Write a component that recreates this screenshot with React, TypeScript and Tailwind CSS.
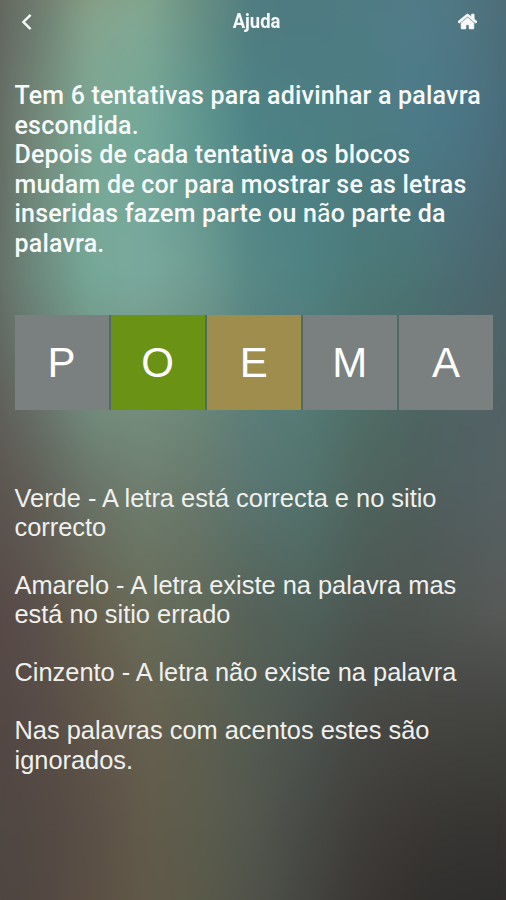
import React from "react";
import { FaHome } from "react-icons/fa";

type Row = { y: number; colors: string[] };

// Colour mesh of the blurred wallpaper: each row lists evenly spaced colours, left to right.
const mesh: Row[] = [
  { y: 0, colors: ["#605f5b", "#74756a", "#869478", "#87a384", "#698d80", "#4f7c80", "#4e7a82", "#507a83", "#527a86", "#50747f", "#4d6b76"] },
  { y: 50, colors: ["#615f59", "#6c7d70", "#85a58e", "#80a895", "#669084", "#4f7c80", "#4e7b82", "#4f7c84", "#517c8a", "#4f7582", "#4c6a76"] },
  { y: 150, colors: ["#5f635e", "#74897a", "#7aa996", "#73a899", "#5f9790", "#4d8386", "#4c8084", "#4d7d82", "#4c7b88", "#4b7484", "#496876"] },
  { y: 285, colors: ["#646761", "#6c8a7e", "#76a898", "#7aa99d", "#6f9c92", "#578886", "#4f8283", "#4c7978", "#4b7475", "#4b6a72", "#4b6269"] },
  { y: 420, colors: ["#5d5954", "#666d65", "#71897a", "#748b7b", "#6a8576", "#5b7c78", "#557974", "#4f6d65", "#4e6460", "#516264", "#546264"] },
  { y: 480, colors: ["#5a524d", "#616158", "#6a766a", "#6f8071", "#687a6e", "#5a7772", "#53746e", "#50665f", "#4f605d", "#526062", "#566365"] },
  { y: 600, colors: ["#584846", "#5b504b", "#65604f", "#696c59", "#616a5a", "#566259", "#4f625b", "#4e5753", "#4f5652", "#545855", "#5a5c5b"] },
  { y: 700, colors: ["#524644", "#564b46", "#5f5549", "#666150", "#5e6050", "#545c52", "#4c544f", "#484945", "#464642", "#444441", "#434340"] },
  { y: 800, colors: ["#504543", "#534943", "#5b4f46", "#625b4c", "#5c5d4d", "#53574e", "#484a46", "#403e3a", "#3b3835", "#373633", "#363532"] },
  { y: 900, colors: ["#4c4541", "#524741", "#5b4f43", "#615848", "#595948", "#4f5149", "#434340", "#393532", "#302e2c", "#2d2c2b", "#2b2b2b"] },
];

function Wallpaper() {
  return (
    <div className="absolute inset-0 overflow-hidden bg-[#4b4d49]" aria-hidden="true">
      <div className="absolute inset-0 scale-[1.07] blur-[10px]">
        {mesh.map((row, i) => {
          const mask = i === 0 ? undefined : `linear-gradient(to bottom, transparent ${mesh[i - 1].y}px, black ${row.y - 1}px)`;
          return (
            <div
              key={row.y}
              className="absolute inset-0"
              style={{ backgroundImage: `linear-gradient(to right, ${row.colors.join(", ")})`, maskImage: mask }}
            />
          );
        })}
      </div>
    </div>
  );
}

function Line({ children }: { children?: React.ReactNode }) {
  return <span className="block whitespace-nowrap">{children}</span>;
}

const tiles = [
  { letter: "P", className: "bg-[#7a8080]" },
  { letter: "O", className: "bg-[#6a9315]" },
  { letter: "E", className: "bg-[#9f8d4d]" },
  { letter: "M", className: "bg-[#7a8080]" },
  { letter: "A", className: "bg-[#7a8080]" },
];

export default function App() {
  return (
    <div className="relative h-[900px] w-[506px] overflow-hidden text-[#f7faf9]">
      <Wallpaper />
      <div className="relative flex h-full flex-col px-[14.5px]">
        <header className="flex h-[43px] items-center justify-between px-[6px]">
          <button aria-label="Voltar" className="block">
            <svg className="block" width="12" height="18" viewBox="0 0 12 18" fill="none" stroke="currentColor" strokeWidth="2.4">
              <path d="M9.6 1.8 L2.4 9 L9.6 16.2" />
            </svg>
          </button>
          <h1 className="ml-[22px] font-['Roboto'] text-[20.5px] font-bold leading-none">
            <span className="inline-block scale-x-90">Ajuda</span>
          </h1>
          <button aria-label="Início" className="mr-[8px] block">
            <FaHome className="block stroke-current" size={19} strokeWidth={22} />
          </button>
        </header>

        <p className="mt-[38px] h-[178px] font-['Roboto'] text-[25px] font-medium leading-[29.6px] tracking-[0.19px]">
          <Line>Tem 6 tentativas para adivinhar a palavra</Line>
          <Line>escondida.</Line>
          <Line>Depois de cada tentativa os blocos</Line>
          <Line>mudam de cor para mostrar se as letras</Line>
          <Line>
            inseridas fazem parte ou n<span className="font-normal">ã</span>o parte da
          </Line>
          <Line>palavra.</Line>
        </p>

        <div className="mt-[56px] grid h-[95px] w-[478.5px] grid-cols-5 gap-[2px] bg-[#4f6b66]">
          {tiles.map((tile) => (
            <div key={tile.letter} className={`flex items-center justify-center pt-px font-['Liberation_Sans'] text-[42px] leading-none text-white ${tile.className}`}>
              {tile.letter}
            </div>
          ))}
        </div>

        <div className="mt-[74px] flex flex-col gap-[29px] font-['Liberation_Sans'] text-[25.4px] leading-[29.1px] text-[#f0f0ed]">
          <p>
            <Line>Verde - A letra está correcta e no sitio</Line>
            <Line>correcto</Line>
          </p>
          <p>
            <Line>Amarelo - A letra existe na palavra mas</Line>
            <Line>está no sitio errado</Line>
          </p>
          <p>
            <Line>Cinzento - A letra não existe na palavra</Line>
          </p>
          <p>
            <Line>Nas palavras com acentos estes são</Line>
            <Line>ignorados.</Line>
          </p>
        </div>
      </div>
    </div>
  );
}
